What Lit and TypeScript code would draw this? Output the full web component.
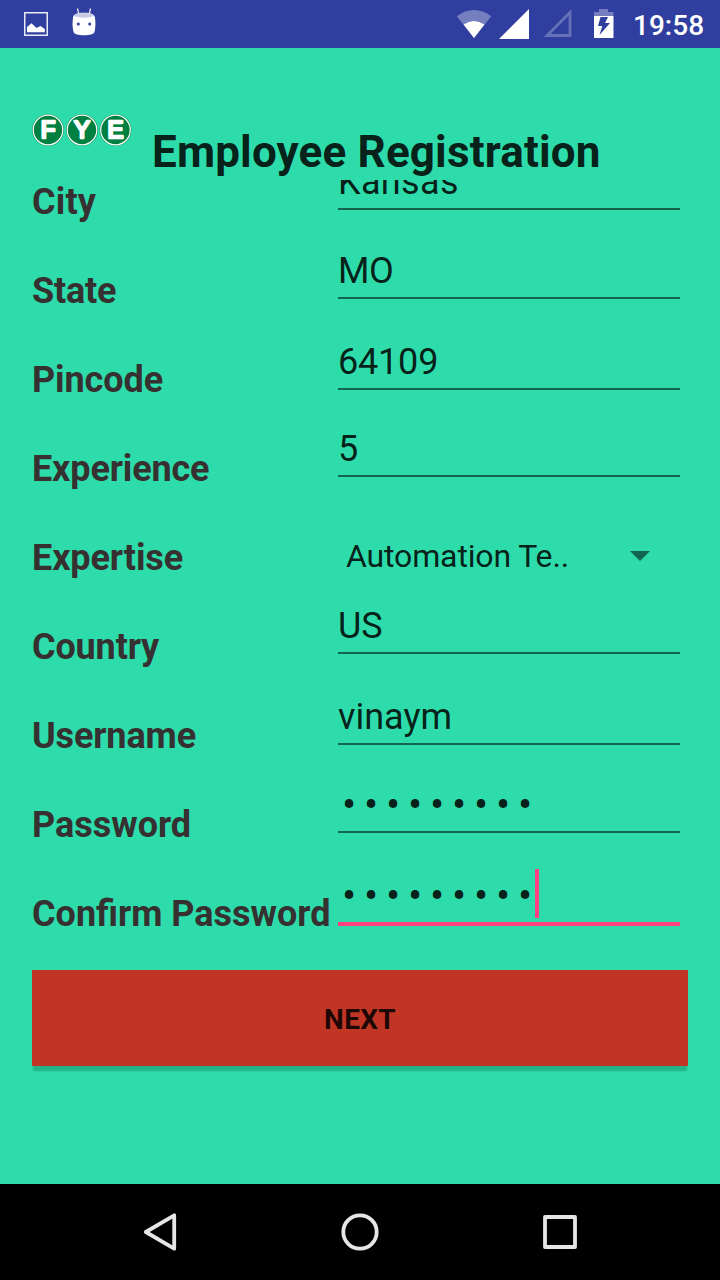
import { LitElement, html, css, svg } from "lit";
import { customElement } from "lit/decorators.js";
import { classMap } from "lit/directives/class-map.js";

interface Field {
  label: string;
  value: string;
  kind: "text" | "spinner" | "secret";
  height: number;
  labelTracking?: number;
  valueTracking?: number;
  focused?: boolean;
}

const FIELDS: Field[] = [
  { label: "City", value: "Kansas", kind: "text", height: 49, labelTracking: 0.2, valueTracking: 0.35 },
  { label: "State", value: "MO", kind: "text", height: 89, labelTracking: -0.2, valueTracking: -0.5 },
  { label: "Pincode", value: "64109", kind: "text", height: 91, labelTracking: -0.1, valueTracking: -0.2 },
  { label: "Experience", value: "5", kind: "text", height: 87, labelTracking: -0.14 },
  { label: "Expertise", value: "Automation Te..", kind: "spinner", height: 110, labelTracking: -0.1, valueTracking: -0.14 },
  { label: "Country", value: "US", kind: "text", height: 67, labelTracking: -0.14 },
  { label: "Username", value: "vinaym", kind: "text", height: 91, labelTracking: -0.12 },
  { label: "Password", value: "•••••••••", kind: "secret", height: 88 },
  { label: "Confirm Password", value: "•••••••••", kind: "secret", height: 93, focused: true },
];

@customElement("status-bar")
class StatusBar extends LitElement {
  static styles = css`
    :host { display: flex; height: 48px; background: #303f9f; color: #fff; }
    svg { display: block; }
    .left { flex: 1; }
    .time { width: 88px; height: 48px; box-sizing: border-box; padding: 2px 0 0 1px; font: 500 28px/48px Roboto, sans-serif; }
  `;
  render() {
    return html`
      <div class="left"><svg width="110" height="48" viewBox="0 0 110 48">
        <rect x="24.75" y="12.75" width="22.5" height="22.5" fill="none" stroke="#e8eaf5" stroke-width="1.5"/>
        <path d="M27 27L31.5 23.3L36.5 28L40.5 26L44.8 29V32.3H27Z" fill="#fff"/>
        <path d="M77.6 9L79 15M90.4 9L89 15" stroke="#e0e2f1" stroke-width="1.3" stroke-linecap="round"/>
        <path d="M73 18C73 14.500 77 12.800 84 12.800S95 14.500 95 18C95.800 23 95.500 28 94.500 32C93.500 34.300 90 35.300 84 35.300S74.500 34.300 73.500 32C72.500 28 72.200 23 73 18Z" fill="#fff"/>
        <ellipse cx="84" cy="15.400" rx="9.300" ry="2.400" fill="#c5c9e4"/>
        <circle cx="78.300" cy="24" r="1.500" fill="#303f9f"/><circle cx="89.700" cy="24" r="1.500" fill="#303f9f"/>
      </svg></div>
      <svg width="180" height="48" viewBox="452 0 180 48">
        <path d="M456.800 16.300Q474 3.500 491.200 16.300L474 38Z" fill="#757fbf"/>
        <path d="M463.600 24.600Q474 17.500 484.400 24.600L474 38Z" fill="#fff"/>
        <path d="M529 9V39H499Z" fill="#fff"/>
        <path d="M570 12.500V35.500H547Z" fill="none" stroke="#6570b7" stroke-width="2.800"/>
        <path d="M594 16V12H599V9H608V12H613.500V16Z" fill="#757fbf"/>
        <path d="M594 16H613.500V38H594Z" fill="#fff"/>
        <path d="M600.500 17L598 26H602.300L599.500 35L610 23H605L608 17Z" fill="#303f9f"/>
      </svg>
      <div class="time">19:58</div>`;
  }
}

@customElement("nav-bar")
class NavBar extends LitElement {
  static styles = css`
    :host { display: flex; justify-content: center; height: 96px; background: #000; }
    svg { display: block; }
  `;
  render() {
    return html`<svg width="480" height="96" viewBox="120 1184 480 96" fill="none" stroke="#e6e6e6" stroke-width="3.800" stroke-linejoin="round">
      <path d="M174.200 1215.300V1248.700L145.800 1232Z"/>
      <circle cx="360" cy="1232" r="16.700"/>
      <rect x="545" y="1217" width="30" height="30"/>
    </svg>`;
  }
}

@customElement("app-root")
class AppRoot extends LitElement {
  static styles = css`
    :host { display: flex; flex-direction: column; width: 720px; height: 1280px; background: #2ddcaa; font-family: Roboto, sans-serif; overflow: hidden; }
    main { flex: 1; display: flex; flex-direction: column; padding: 64px 32px 0; min-height: 0; }
    header { display: flex; height: 68px; color: rgba(0,0,0,.87); }
    .logo { width: 120px; height: 36px; }
    .logo text { font: 400 24px "Liberation Sans", sans-serif; }
    h1 { margin: 14px 0 0; font-size: 44px; line-height: 52px; font-weight: 700; letter-spacing: .16px; white-space: nowrap; }
    .form { display: flex; height: 758px; overflow: hidden; }
    .labels { width: 306px; padding-top: 1px; }
    .label { height: 89px; font-size: 36px; line-height: 42px; font-weight: 700; color: #363030; white-space: nowrap; }
    .fields { width: 342px; margin-top: -19px; color: rgba(0,0,0,.87); }
    .field { position: relative; display: flex; flex-direction: column; justify-content: flex-end; box-sizing: border-box; font-size: 36px; line-height: 42px; padding-bottom: 5px; border-bottom: 2px solid rgba(0,0,0,.54); }
    .field.focused { border-bottom: 4px solid #ff4081; }
    .field.spinner { flex-direction: row; align-items: flex-start; justify-content: space-between; padding: 60px 30px 0 8px; border: 0; font-size: 32px; line-height: 38px; }
    .arrow { margin-top: 14px; }
    .dots { display: flex; }
    .dot { width: 22px; text-align: center; font-weight: 700; }
    .caret { position: absolute; left: 197px; bottom: 4px; width: 4px; height: 49px; background: #ff4081; }
    button { display: block; width: 100%; height: 96px; margin: 32px 0 0; padding: 4px 0 0; border: 0; background: #c13524; color: rgba(0,0,0,.87); font: 700 28px/34px Roboto, sans-serif; letter-spacing: .3px; box-shadow: 0 6px 2px -1px rgba(0,0,0,.2); }
  `;

  private badge(letter: string, cx: number) {
    return svg`<circle cx=${cx} cy="18" r="15.800" fill="#08783c"/>
      <circle cx=${cx} cy="18" r="14.800" fill="#008040" stroke="#fff" stroke-width="1.200"/>
      <text x=${cx} y="26.300" text-anchor="middle" fill="#fff" stroke="#fff" stroke-width="2.600" stroke-linejoin="round">${letter}</text>`;
  }

  private value(f: Field) {
    const tracking = `letter-spacing:${f.valueTracking ?? 0}px`;
    if (f.kind === "spinner") return html`<span style=${tracking}>${f.value}</span><svg class="arrow" width="20" height="10" viewBox="0 0 20 10"><path d="M0 0H20L10 10Z" fill="#000" fill-opacity=".54"/></svg>`;
    if (f.kind === "secret") return html`<div class="dots">${[...f.value].map((c) => html`<span class="dot">${c}</span>`)}</div>`;
    return html`<span style=${tracking}>${f.value}</span>`;
  }

  render() {
    return html`
      <status-bar></status-bar>
      <main>
        <header>
          <svg class="logo" viewBox="0 0 120 36">${this.badge("F", 16)}${this.badge("Y", 50)}${this.badge("E", 83.5)}</svg>
          <h1>Employee Registration</h1>
        </header>
        <div class="form">
          <div class="labels">${FIELDS.map((f) => html`<div class="label" style="letter-spacing:${f.labelTracking ?? 0}px">${f.label}</div>`)}</div>
          <div class="fields">${FIELDS.map((f) => html`
            <div class=${classMap({ field: true, spinner: f.kind === "spinner", focused: !!f.focused })} style="height:${f.height}px">
              ${this.value(f)}${f.focused ? html`<i class="caret"></i>` : ""}
            </div>`)}</div>
        </div>
        <button>NEXT</button>
      </main>
      <nav-bar></nav-bar>`;
  }
}
